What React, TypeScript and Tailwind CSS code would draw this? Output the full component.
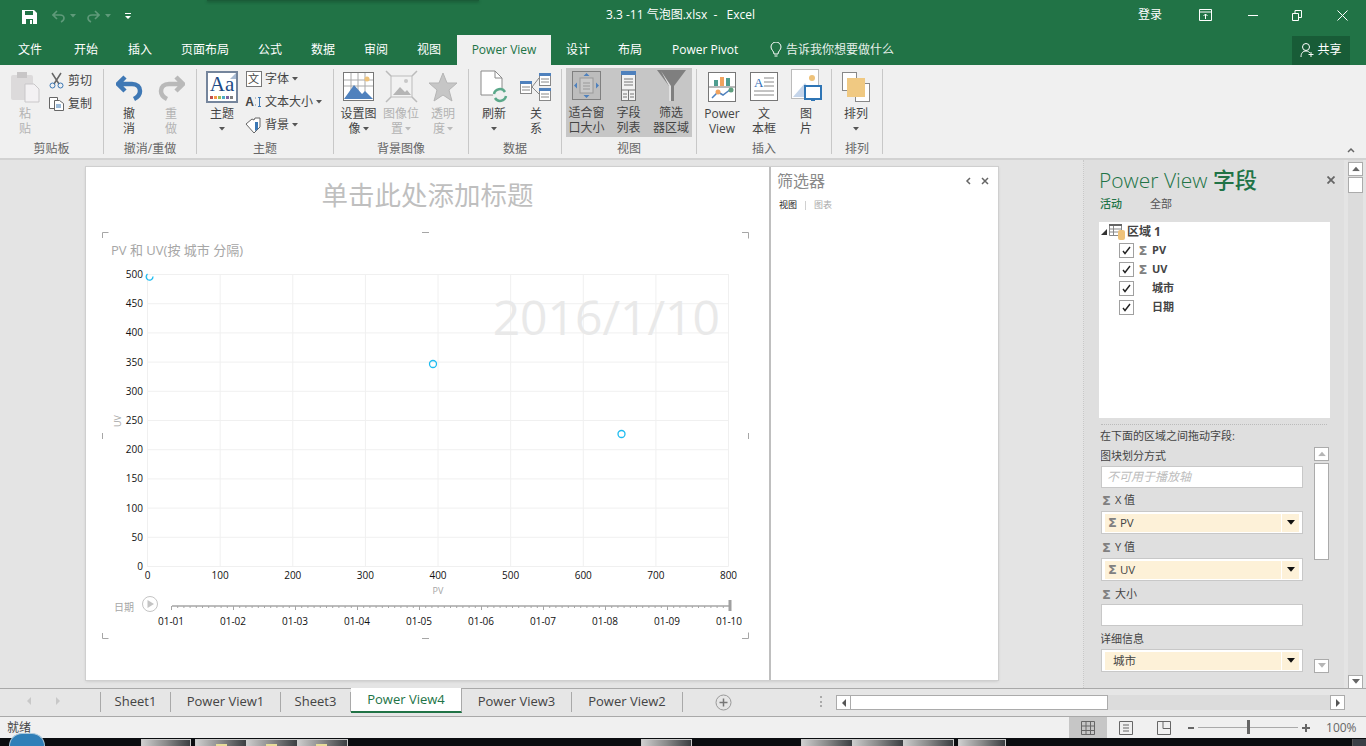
import React from "react";

const Caret = ({ color = "#555", className = "", w = 6 }: { color?: string; className?: string; w?: number }) => (
  <svg width={w} height={(w * 2) / 3} viewBox="0 0 6 4" className={`inline-block ${className}`}>
    <path d="M0 0h6L3 3.5z" fill={color} />
  </svg>
);

const LargeBtn = ({
  w,
  icon,
  lines,
  disabled,
}: {
  w: string;
  icon: React.ReactNode;
  lines: React.ReactNode[];
  disabled?: boolean;
}) => (
  <div className={`${w} flex shrink-0 flex-col items-center`}>
    <div className="flex h-[35px] items-center justify-center">{icon}</div>
    <div className={`mt-[2px] text-center text-[12px] leading-[15px] ${disabled ? "text-[#b3b3b3]" : "text-[#444]"}`}>
      {lines.map((l, i) => (
        <div key={i} className="flex h-[15px] items-center justify-center whitespace-nowrap">
          {l}
        </div>
      ))}
    </div>
  </div>
);

const Group = ({
  w,
  pl,
  label,
  children,
}: {
  w: string;
  pl: string;
  label: string;
  children: React.ReactNode;
}) => (
  <div className={`${w} flex shrink-0 flex-col`}>
    <div className={`flex h-[75px] ${pl} pt-[4px]`}>{children}</div>
    <div className="h-[17px] text-center text-[12px] leading-[17px] text-[#666]">{label}</div>
  </div>
);

const Sep = () => <div className="mt-[4px] h-[85px] w-px shrink-0 bg-[#c8c8c8]" />;

const SmallRow = ({ icon, text, caret }: { icon: React.ReactNode; text: string; caret?: boolean }) => (
  <div className="flex h-[23px] items-center gap-[3px] text-[12px] text-[#444]">
    <span className="flex w-[17px] justify-center">{icon}</span>
    <span className="whitespace-nowrap">{text}</span>
    {caret && <Caret />}
  </div>
);

const PasteIcon = () => (
  <svg width="30" height="32" viewBox="0 0 30 32">
    <rect x="1" y="4" width="22" height="25" rx="2" fill="#dcdadb" />
    <rect x="7" y="1" width="10" height="6" fill="#c8c6c7" />
    <path d="M15 13h9l5 5v13H15z" fill="#f3f1f3" stroke="#c9c7c9" />
  </svg>
);
const UndoIcon = ({ flip, color }: { flip?: boolean; color: string }) => (
  <svg width="27" height="28" viewBox="0 0 27 28" style={flip ? { transform: "scaleX(-1)" } : undefined}>
    <path d="M9 4 2 11l7 7M3 11h13c5 0 8 3 8 7s-2 6-6 8" fill="none" stroke={color} strokeWidth="4.5" />
  </svg>
);
const ThemeIcon = () => (
  <div className="relative flex h-[32px] w-[32px] flex-col items-center border-[2px] border-[#75859c] bg-white pt-[1px]">
    <span className="font-['Liberation_Serif',serif] text-[21px] leading-[21px] text-[#1d4a85]">Aa</span>
    <svg width="24" height="3" viewBox="0 0 24 3" className="mt-[1px]">
      {["#c0504d", "#f79646", "#9bbb59", "#4bacc6", "#8064a2", "#7f7f7f"].map((c, i) => (
        <rect key={c} x={i * 4} width="3" height="3" fill={c} />
      ))}
    </svg>
    <span className="absolute right-0 top-0 h-0 w-0 border-b-[6px] border-l-[6px] border-b-[#a9bbd3] border-l-transparent" />
  </div>
);
const SetImageIcon = () => (
  <svg width="31" height="29" viewBox="0 0 31 29">
    <rect x=".5" y=".5" width="30" height="28" fill="#fff" stroke="#777" />
    <path d="M1 8h29M1 14h29M8 1v20M15 1v20M22 1v20" stroke="#aaa" />
    <circle cx="24" cy="7" r="2.5" fill="#eec27a" />
    <path d="M1 27 11 13l8 9 3-3 8 8z" fill="#4f81bd" />
  </svg>
);
const ImagePosIcon = () => (
  <svg width="33" height="33" viewBox="0 0 33 33">
    <rect x="6" y="6" width="21" height="21" fill="#f2f2f2" stroke="#bbb" />
    <path d="M8 25l7-8 5 5 2-2 4 5z" fill="#b5b5b5" />
    <circle cx="21" cy="11" r="2" fill="#c8c8c8" />
    <path d="M1 1l5 5M32 1l-5 5M1 32l5-5M32 32l-5-5" stroke="#bbb" strokeWidth="1.5" />
  </svg>
);
const StarIcon = () => (
  <svg width="30" height="30" viewBox="0 0 30 30">
    <path d="M15 1l4 10h10l-8 7 3 11-9-6-9 6 3-11-8-7h10z" fill="#c6c6c6" stroke="#b5b5b5" />
  </svg>
);
const RefreshIcon = () => (
  <svg width="28" height="33" viewBox="0 0 28 33">
    <path d="M1 1h14l7 7v17H1z" fill="#fff" stroke="#8a8a8a" />
    <path d="M15 1v7h7" fill="none" stroke="#8a8a8a" />
    <circle cx="20" cy="25" r="7" fill="#f0f0f0" />
    <path d="M14 24a6 6 0 0 1 11-2M26 26a6 6 0 0 1-11 2" fill="none" stroke="#5ba88a" strokeWidth="2.5" />
  </svg>
);
const MiniTable = ({ x, y }: { x: number; y: number }) => (
  <g>
    <rect x={x + 0.5} y={y + 0.5} width="11" height="12" fill="#fff" stroke="#888" />
    <rect x={x} y={y} width="12" height="3" fill="#4f81bd" />
    <path d={`M${x + 2} ${y + 6}h8M${x + 2} ${y + 9}h8`} stroke="#888" />
  </g>
);
const RelationIcon = () => (
  <svg width="32" height="29" viewBox="0 0 32 29">
    <MiniTable x={19} y={1} />
    <MiniTable x={0} y={9} />
    <MiniTable x={19} y={16} />
    <path d="M12 15l7-9M12 15l7 7" stroke="#888" fill="none" />
  </svg>
);
const FitIcon = () => (
  <svg width="30" height="29" viewBox="0 0 30 29">
    <rect x=".5" y=".5" width="28" height="28" fill="#bdbdbd" stroke="#808080" />
    <rect x="8" y="7" width="13" height="15" fill="#c9c9c9" stroke="#999" />
    <path d="M11 12h7M11 15h7M11 18h7" stroke="#999" />
    <path d="M14.500 2l3 3h-6zM14.500 27l3-3h-6zM2 14.500l3-3v6zM27 14.500l-3-3v6z" fill="#4f81bd" />
  </svg>
);
const FieldListIcon = () => (
  <svg width="15" height="30" viewBox="0 0 15 30">
    <rect x=".5" y=".5" width="14" height="29" fill="#f2f2f2" stroke="#777" />
    <rect width="15" height="4" fill="#4f81bd" />
    <path d="M3 8h9M3 11h9M3 14h9M0 19h15M7.500 19v11M2 23h4M9 23h4M2 26h4M9 26h4" stroke="#777" />
  </svg>
);
const FunnelIcon = () => (
  <svg width="29" height="31" viewBox="0 0 29 31">
    <path d="M0 0h29L17 16v15h-5V16z" fill="#7f7f7f" />
    <path d="M4 1l10 15v15h-2V16z" fill="#e0e0e0" />
  </svg>
);
const PowerViewIcon = () => (
  <svg width="28" height="30" viewBox="0 0 28 30">
    <rect x=".5" y=".5" width="27" height="29" fill="#fff" stroke="#777" />
    <path d="M1 15h26" stroke="#777" />
    <rect x="6" y="8" width="4" height="6" fill="#4f9d8f" />
    <rect x="12" y="5" width="4" height="9" fill="#f0a35e" />
    <rect x="18" y="6" width="4" height="8" fill="#4f9d8f" />
    <path d="M4 26l6-6 5 3 8-6" fill="none" stroke="#4f81bd" strokeWidth="1.5" />
    <circle cx="10" cy="20" r="2.500" fill="#f0a35e" />
    <circle cx="23" cy="18" r="2.500" fill="#5e9e7e" />
  </svg>
);
const TextBoxIcon = () => (
  <svg width="28" height="29" viewBox="0 0 28 29">
    <rect x=".5" y=".5" width="27" height="28" fill="#fff" stroke="#777" />
    <text x="4" y="15" fontSize="13" fill="#2f6cb5" fontFamily="Liberation Serif, serif">A</text>
    <path d="M14 6h10M14 10h10M14 14h10M4 19h20M4 23h20" stroke="#888" />
  </svg>
);
const PictureIcon = () => (
  <svg width="31" height="35" viewBox="0 0 31 35">
    <rect x=".5" y=".5" width="27" height="29" fill="#fff" stroke="#bbb" />
    <circle cx="21" cy="9" r="3" fill="#eec27a" />
    <path d="M2 28 14 14l10 14z" fill="#c5d5ea" />
    <rect x="14" y="17" width="16" height="13" fill="#fff" stroke="#2f75b5" strokeWidth="2" />
    <path d="M20 30h4v2h-4z" fill="#2f75b5" />
  </svg>
);
const ArrangeIcon = () => (
  <svg width="28" height="30" viewBox="0 0 28 30">
    <rect x=".5" y=".5" width="14" height="18" fill="#fff" stroke="#888" />
    <rect x="13.500" y="11.500" width="14" height="18" fill="#fff" stroke="#888" />
    <rect x="5" y="6" width="18" height="19" fill="#f0c982" />
  </svg>
);

const Scissors = () => (
  <svg width="15" height="17" viewBox="0 0 15 17">
    <path d="M3 1l7 11M12 1L5 12" stroke="#666" strokeWidth="1.5" />
    <circle cx="3.500" cy="13.500" r="2.500" fill="none" stroke="#3b78b5" />
    <circle cx="11.500" cy="13.500" r="2.500" fill="none" stroke="#3b78b5" />
  </svg>
);
const CopyIcon = () => (
  <svg width="15" height="14" viewBox="0 0 15 14">
    <path d="M.5.5h8v11h-8z" fill="#fff" stroke="#666" />
    <path d="M5.500 3.500h5l4 3v7h-9z" fill="#fff" stroke="#666" />
    <path d="M7 8h5M7 10h5" stroke="#3b78b5" />
  </svg>
);

const Ribbon = () => (
  <div className="flex h-[95px] shrink-0 border-b-[2px] border-[#d2d2d2] bg-[#f0f0f0]">
    <Group w="w-[103px]" pl="pl-[4px]" label="剪贴板">
      <LargeBtn w="w-[42px]" icon={<PasteIcon />} lines={["粘", "贴"]} disabled />
      <div className="ml-[2px] flex flex-col">
        <SmallRow icon={<Scissors />} text="剪切" />
        <SmallRow icon={<CopyIcon />} text="复制" />
      </div>
    </Group>
    <Sep />
    <Group w="w-[92px]" pl="pl-[4px]" label="撤消/重做">
      <LargeBtn w="w-[42px]" icon={<UndoIcon color="#3f78b5" />} lines={["撤", "消"]} />
      <LargeBtn w="w-[42px]" icon={<UndoIcon flip color="#b9b9b9" />} lines={["重", "做"]} disabled />
    </Group>
    <Sep />
    <Group w="w-[136px]" pl="pl-[3px]" label="主题">
      <LargeBtn w="w-[44px]" icon={<ThemeIcon />} lines={["主题", <Caret key="c" />]} />
      <div className="ml-[1px] mt-[-2px] flex flex-col">
        <SmallRow
          icon={<span className="flex h-[16px] w-[16px] items-center justify-center border border-[#777] bg-white text-[11px] leading-none">文</span>}
          text="字体"
          caret
        />
        <SmallRow
          icon={
            <span className="flex items-center font-['Liberation_Sans',sans-serif] text-[12px] font-bold leading-none text-[#444]">
              A
              <svg width="8" height="12" viewBox="0 0 8 12">
                <path d="M1 2h1M1 9h1" stroke="#888" />
                <path d="M5.500 2v8M4 1.500h3M4 10.500h3" stroke="#3b78b5" />
              </svg>
            </span>
          }
          text="文本大小"
          caret
        />
        <SmallRow
          icon={
            <svg width="17" height="16" viewBox="0 0 17 16">
              <path d="M1 7l6-5 2 1 1-2h5v9l-6 6z" fill="#fff" stroke="#666" />
              <path d="M10 5h3v7l-3 2z" fill="#3b78b5" />
            </svg>
          }
          text="背景"
          caret
        />
      </div>
    </Group>
    <Sep />
    <Group w="w-[134px]" pl="pl-[3px]" label="背景图像">
      <LargeBtn w="w-[43px]" icon={<SetImageIcon />} lines={["设置图", <span key="a" className="flex items-center gap-[2px]">像<Caret /></span>]} />
      <LargeBtn w="w-[42px]" icon={<ImagePosIcon />} lines={["图像位", <span key="a" className="flex items-center gap-[2px]">置<Caret color="#bbb" /></span>]} disabled />
      <LargeBtn w="w-[42px]" icon={<StarIcon />} lines={["透明", <span key="a" className="flex items-center gap-[2px]">度<Caret color="#bbb" /></span>]} disabled />
    </Group>
    <Sep />
    <Group w="w-[92px]" pl="pl-[4px]" label="数据">
      <LargeBtn w="w-[42px]" icon={<RefreshIcon />} lines={["刷新", <Caret key="c" />]} />
      <LargeBtn w="w-[42px]" icon={<RelationIcon />} lines={["关", "系"]} />
    </Group>
    <Sep />
    <Group w="w-[134px]" pl="pl-[4px]" label="视图">
      <div className="-mt-px flex h-[69px] bg-[#c6c6c6]">
        <LargeBtn w="w-[41px]" icon={<FitIcon />} lines={["适合窗", "口大小"]} />
        <LargeBtn w="w-[43px]" icon={<FieldListIcon />} lines={["字段", "列表"]} />
        <LargeBtn w="w-[42px]" icon={<FunnelIcon />} lines={["筛选", "器区域"]} />
      </div>
    </Group>
    <Sep />
    <Group w="w-[134px]" pl="pl-[4px]" label="插入">
      <LargeBtn w="w-[42px]" icon={<PowerViewIcon />} lines={["Power", "View"]} />
      <LargeBtn w="w-[42px]" icon={<TextBoxIcon />} lines={["文", "本框"]} />
      <LargeBtn w="w-[42px]" icon={<PictureIcon />} lines={["图", "片"]} />
    </Group>
    <Sep />
    <Group w="w-[50px]" pl="pl-[3px]" label="排列">
      <LargeBtn w="w-[42px]" icon={<ArrangeIcon />} lines={["排列", <Caret key="c" />]} />
    </Group>
    <Sep />
    <div className="flex flex-1 items-end justify-end pb-[5px] pr-[11px]">
      <svg width="8" height="6" viewBox="0 0 8 6">
        <path d="M1 5l3-3 3 3" fill="none" stroke="#666" strokeWidth="1.5" />
      </svg>
    </div>
  </div>
);

const TitleBar = () => (
  <div className="relative flex h-[35px] shrink-0 items-center bg-[#217346] pb-[5px] text-[12px] text-white">
    <div className="absolute left-[207px] top-0 h-[1px] w-[272px] bg-[#1a5c38] shadow-[0_1px_3px_#123d26]" />
    <svg width="15" height="14" viewBox="0 0 15 14" className="ml-[22px] mt-[3px]">
      <path d="M0 0h12l3 3v11H0z" fill="#fff" />
      <path d="M3 1h8v4H3zM4 9h7v5H4z" fill="#217346" />
      <path d="M8 10h2v4H8z" fill="#fff" />
    </svg>
    <svg width="13" height="13" viewBox="0 0 13 13" className="ml-[15px] mt-[2px]">
      <path d="M5 1 1 5l4 4M2 5h6c3 0 4 2 4 3s-1 3-3 4" fill="none" stroke="#5f9a7a" strokeWidth="1.6" />
    </svg>
    <Caret color="#5f9a7a" className="ml-[5px] mt-[2px]" />
    <svg width="13" height="13" viewBox="0 0 13 13" className="ml-[11px] mt-[2px] -scale-x-100">
      <path d="M5 1 1 5l4 4M2 5h6c3 0 4 2 4 3s-1 3-3 4" fill="none" stroke="#5f9a7a" strokeWidth="1.6" />
    </svg>
    <Caret color="#5f9a7a" className="ml-[5px] mt-[2px]" />
    <svg width="6" height="6" viewBox="0 0 6 6" className="ml-[14px] mt-[2px]">
      <path d="M0 0h6v1H0zM0 3h6L3 6z" fill="#fff" />
    </svg>
    <span className="ml-[475px] whitespace-nowrap">3.3 -11 气泡图.xlsx&nbsp;&nbsp;-&nbsp;&nbsp;&nbsp;Excel</span>
    <span className="ml-auto">登录</span>
    <svg width="13" height="12" viewBox="0 0 13 12" className="ml-[37px]">
      <path d="M.5.5h12v11H.5zM1 3h11M6.500 10V5M4.500 7l2-2 2 2" fill="none" stroke="#fff" />
    </svg>
    <div className="ml-[36px] h-px w-[10px] bg-white" />
    <svg width="10" height="11" viewBox="0 0 10 11" className="ml-[34px]">
      <path d="M.5 3.500h6v7h-6zM3 3V.5h6.500v7H7" fill="none" stroke="#fff" />
    </svg>
    <svg width="11" height="11" viewBox="0 0 11 11" className="ml-[35px] mr-[18px]">
      <path d="M.5.5l10 10M10.500.5l-10 10" stroke="#fff" />
    </svg>
  </div>
);

const tabs = [
  { t: "文件", w: "w-[56px]" },
  { t: "开始", w: "w-[54px]" },
  { t: "插入", w: "w-[53px]" },
  { t: "页面布局", w: "w-[77px]" },
  { t: "公式", w: "w-[53px]" },
  { t: "数据", w: "w-[53px]" },
  { t: "审阅", w: "w-[53px]" },
  { t: "视图", w: "w-[40px]" },
];

const TabBar = () => (
  <div className="flex h-[30px] shrink-0 items-center bg-[#217346] text-[12px] text-white">
    <div className="w-[18px]" />
    {tabs.map((x) => (
      <div key={x.t} className={`${x.w} whitespace-nowrap`}>
        {x.t}
      </div>
    ))}
    <div className="flex h-full w-[94px] items-center justify-center whitespace-nowrap bg-[#f0f0f0] text-[#217346]">
      Power View
    </div>
    <div className="ml-[15px] w-[52px]">设计</div>
    <div className="w-[54px]">布局</div>
    <div className="w-[98px] whitespace-nowrap">Power Pivot</div>
    <svg width="12" height="16" viewBox="0 0 12 16">
      <path d="M4 12c0-3-3-4-3-7a5 5 0 0 1 10 0c0 3-3 4-3 7zM4.500 14h3" fill="none" stroke="#fff" />
    </svg>
    <span className="ml-[4px] whitespace-nowrap text-[#e6f0ea]">告诉我你想要做什么</span>
    <div className="ml-auto mr-[16px] flex h-[29px] w-[58px] items-center justify-center gap-[2px] bg-[#185c37]">
      <svg width="15" height="16" viewBox="0 0 15 16">
        <circle cx="6" cy="5" r="3.500" fill="none" stroke="#fff" />
        <path d="M1 15c0-4 2-6 5-6 2 0 3 1 4 2M11 10v5M8.500 12.500h5" fill="none" stroke="#fff" />
      </svg>
      共享
    </div>
  </div>
);

const yTicks = [0, 50, 100, 150, 200, 250, 300, 350, 400, 450, 500];
const xTicks = [0, 100, 200, 300, 400, 500, 600, 700, 800];
const dates = ["01-01", "01-02", "01-03", "01-04", "01-05", "01-06", "01-07", "01-08", "01-09", "01-10"];
const xAt = (v: number) => 147.5 + (v / 800) * 581;
const yAt = (v: number) => 566.5 - (v / 500) * 292;
const dateX = (i: number) => 171 + i * 62;

const Chart = () => (
  <svg width="683" height="455" viewBox="86 225 683 455" className="block">
    <path
      d="M102.500 238v-5.500h6M742 232.500h6.500v6M102.500 633v5.500h6M742 638.500h6.500v-6M422 232.500h7M422 638.500h7M102.500 433v6M748.500 433v6"
      fill="none"
      stroke="#a6a6a6"
    />
    <text x="111" y="255" fontSize="13" fill="#a6a6a6">PV 和 UV(按 城市 分隔)</text>
    {yTicks.map((v) => (
      <g key={v}>
        <path d={`M147 ${yAt(v)}H728.500`} stroke="#f0f0f0" />
        <text x="143" y={yAt(v) + 3.500} fontSize="10" textAnchor="end" fill="#111">{v}</text>
      </g>
    ))}
    {xTicks.map((v) => (
      <g key={v}>
        <path d={`M${xAt(v)} 274V566.500`} stroke="#f0f0f0" />
        <text x={xAt(v)} y="579" fontSize="10" textAnchor="middle" fill="#111">{v}</text>
      </g>
    ))}
    <text x="720" y="335" fontSize="48" textAnchor="end" fill="#e9e9e9">2016/1/10</text>
    <text x="438" y="594" fontSize="9" textAnchor="middle" fill="#a6a6a6">PV</text>
    <text x="121" y="421" fontSize="9" textAnchor="middle" fill="#a6a6a6" transform="rotate(-90 121 421)">UV</text>
    <g fill="none" stroke="#1ebcf0" strokeWidth="1.300">
      <path d="M147.500 274a3.500 3.500 0 0 0 0 5.500a3.500 3.500 0 0 0 5.500-3" />
      <circle cx="433" cy="364" r="3.500" />
      <circle cx="621.500" cy="434" r="3.500" />
    </g>
    <text x="114" y="611" fontSize="10" fill="#a6a6a6">日期</text>
    <circle cx="150" cy="604" r="7.500" fill="none" stroke="#c4c4c4" />
    <path d="M147.500 600l6.500 4-6.500 4z" fill="#c4c4c4" />
    <path d="M172 606H730" stroke="#a6a6a6" strokeWidth="1.500" />
    {Array.from({ length: 91 }, (_, i) => (
      <path key={i} d={`M${171.500 + (i * 62) / 10} 606v${i % 10 === 0 ? 4 : 2}`} stroke="#a6a6a6" />
    ))}
    <rect x="728.500" y="600" width="3" height="11" fill="#a0a0a0" />
    {dates.map((d, i) => (
      <text key={d} x={dateX(i)} y="625" fontSize="10" textAnchor="middle" fill="#111">{d}</text>
    ))}
  </svg>
);

const Canvas = () => (
  <div className="flex h-[513px] w-[912px] bg-white shadow-[0_0_0_1px_#cfcfcf,0_1px_3px_#bdbdbd]">
    <div className="w-[683px] shrink-0">
      <div className="flex h-[58px] items-start justify-center pt-[9px] text-[26.500px] leading-[38px] text-[#bfbfbf]">
        单击此处添加标题
      </div>
      <Chart />
    </div>
    <div className="flex-1 border-l-[2px] border-[#bfbfbf] pl-[6px] pr-[9px]">
      <div className="flex h-[28px] items-center justify-between">
        <span className="text-[16px] text-[#8a8a8a]">筛选器</span>
        <span className="flex items-center gap-[10px]">
          <svg width="6" height="8" viewBox="0 0 6 8">
            <path d="M5 1 2 4l3 3" fill="none" stroke="#666" strokeWidth="1.500" />
          </svg>
          <svg width="8" height="8" viewBox="0 0 8 8">
            <path d="M1 1l6 6M7 1 1 7" stroke="#666" strokeWidth="1.500" />
          </svg>
        </span>
      </div>
      <div className="ml-[2px] mt-[4px] flex items-center text-[9px] leading-[12px]">
        <span className="text-[#222]">视图</span>
        <span className="mx-[8px] h-[9px] w-px bg-[#d0d0d0]" />
        <span className="text-[#aaa]">图表</span>
      </div>
    </div>
  </div>
);

const Sigma = ({ cls = "" }: { cls?: string }) => (
  <span className={`font-['DejaVu_Sans',sans-serif] font-bold leading-none text-[#808080] ${cls}`}>Σ</span>
);

const fields = [
  { name: "PV", sum: true },
  { name: "UV", sum: true },
  { name: "城市", sum: false },
  { name: "日期", sum: false },
];

const Chip = ({ children }: { children: React.ReactNode }) => (
  <div className="flex h-[23px] items-center border border-[#c8c8c8] bg-white px-[3px]">
    <div className="flex h-[18px] flex-1 items-center gap-[3px] bg-[#fdf1d8] pl-[3px] text-[11.500px] text-[#444]">{children}</div>
    <div className="ml-px flex h-[18px] w-[17px] items-center justify-center bg-[#fdf1d8]">
      <Caret color="#111" w={8} />
    </div>
  </div>
);

const WellLabel = ({ sigma, text, cls }: { sigma?: boolean; text: string; cls: string }) => (
  <div className={`flex items-center gap-[4px] text-[11px] leading-[14px] text-[#444] ${cls}`}>
    {sigma && <Sigma cls="text-[13px] ml-[1px]" />}
    {text}
  </div>
);

const MiniBtn = ({ up, disabled }: { up?: boolean; disabled?: boolean }) => (
  <div className="flex h-[14px] w-[15px] items-center justify-center border border-[#ababab] bg-white">
    <Caret color={disabled ? "#b5b5b5" : "#666"} w={8} className={up ? "rotate-180" : ""} />
  </div>
);

const FieldPane = () => (
  <div className="flex h-full w-[260px] shrink-0 flex-col bg-[#dfdfdf]">
    <div className="flex h-[38px] items-center justify-between pl-[15px] pr-[9px] pt-[1px]">
      <span className="whitespace-nowrap text-[21px] font-light leading-[28px] text-[#217346]">
        Power View <span className="font-medium text-[22px]">字段</span>
      </span>
      <svg width="8" height="8" viewBox="0 0 8 8">
        <path d="M.5.5l7 7M7.500.5l-7 7" stroke="#666" strokeWidth="1.800" />
      </svg>
    </div>
    <div className="flex h-[13px] items-center pl-[16px] text-[11px]">
      <span className="w-[50px] font-medium text-[#217346]">活动</span>
      <span className="text-[#555]">全部</span>
    </div>
    <div className="ml-[15px] mt-[11px] h-[196px] w-[231px] bg-white pt-[1px]">
      <div className="flex h-[18px] items-center pl-[2px]">
        <svg width="6" height="6" viewBox="0 0 6 6">
          <path d="M6 0v6H0z" fill="#333" />
        </svg>
        <svg width="17" height="16" viewBox="0 0 17 16" className="ml-[2px]">
          <path d="M.5 1.500h12v10H.5zM4.500 2v9M.5 5h12M.5 8h12" fill="none" stroke="#888" />
          <rect width="13" height="2" fill="#666" />
          <rect x="9" y="6" width="7" height="10" rx="2" fill="#eec27a" />
        </svg>
        <span className="ml-[1px] text-[12px] font-bold text-[#444]">区域 1</span>
      </div>
      {fields.map((f) => (
        <div key={f.name} className="flex h-[19px] items-center pl-[20px]">
          <div className="flex h-[15px] w-[15px] items-center justify-center border border-[#a0a0a0]">
            <svg width="9" height="9" viewBox="0 0 9 9">
              <path d="M1 5l2 2.500L8 1" fill="none" stroke="#222" strokeWidth="1.400" />
            </svg>
          </div>
          <span className="flex w-[18px] justify-center">{f.sum && <Sigma cls="text-[13px]" />}</span>
          <span className="text-[11px] font-bold text-[#444]">{f.name}</span>
        </div>
      ))}
    </div>
    <div className="ml-[17px] mt-[6px] w-[226px] border-t border-dotted border-[#bbb]" />
    <div className="ml-[16px] mt-[4px] text-[11px] leading-[14px] text-[#444]">在下面的区域之间拖动字段:</div>
    <div className="flex min-h-0 flex-1">
      <div className="ml-[17px] w-[202px] overflow-hidden pt-[6px]">
        <WellLabel text="图块划分方式" cls="-ml-[1px] h-[14px]" />
        <div className="mt-[3px] flex h-[22px] items-center border border-[#c8c8c8] bg-white pl-[5px] text-[12px] italic text-[#bdbdbd]">
          不可用于播放轴
        </div>
        <WellLabel sigma text="X 值" cls="mt-[5px] h-[14px]" />
        <div className="mt-[4px]"><Chip><Sigma cls="text-[13px]" />PV</Chip></div>
        <WellLabel sigma text="Y 值" cls="mt-[6px] h-[14px]" />
        <div className="mt-[4px]"><Chip><Sigma cls="text-[13px]" />UV</Chip></div>
        <WellLabel sigma text="大小" cls="mt-[6px] h-[14px]" />
        <div className="mt-[3px] h-[22px] border border-[#c8c8c8] bg-white" />
        <WellLabel text="详细信息" cls="-ml-[1px] mt-[6px] h-[14px]" />
        <div className="mt-[3px] h-[26px] overflow-hidden"><Chip><span className="ml-[5px]">城市</span></Chip></div>
      </div>
      <div className="ml-[11px] flex w-[15px] flex-col pt-[4px]">
        <MiniBtn up disabled />
        <div className="mt-[2px] h-[97px] border border-[#ababab] bg-white" />
        <div className="mt-[99px]">
          <MiniBtn disabled />
        </div>
      </div>
    </div>
  </div>
);

const MainArea = () => (
  <div className="flex h-[528px] shrink-0 bg-[#e4e4e4]">
    <div className="w-[1084px] shrink-0 border-r border-dotted border-[#c8c8c8] pl-[86px] pt-[7px]">
      <Canvas />
    </div>
    <FieldPane />
    <div className="ml-[4px] flex w-[15px] flex-col bg-[#dcdcdc] pt-[2px]">
      <MiniBtn up />
      <div className="mt-[1px] h-[16px] border border-[#ababab] bg-white" />
      <div className="mt-auto mb-[-1px]">
        <MiniBtn />
      </div>
    </div>
  </div>
);

const sheetTabs = [
  { t: "Sheet1", w: "w-[70px]" },
  { t: "Power View1", w: "w-[110px]" },
  { t: "Sheet3", w: "w-[70px]" },
  { t: "Power View4", w: "w-[111px]", active: true },
  { t: "Power View3", w: "w-[110px]" },
  { t: "Power View2", w: "w-[111px]" },
];

const SheetBar = () => (
  <div className="flex h-[29px] shrink-0 border-b border-t border-[#a9a9a9] bg-[#e6e6e6] text-[13px] leading-[18px] text-[#444]">
    <div className="flex w-[100px] items-center pl-[27px] pb-[3px]">
      <svg width="4" height="8" viewBox="0 0 4 8"><path d="M4 0v8L0 4z" fill="#c8c8c8" /></svg>
      <svg width="4" height="8" viewBox="0 0 4 8" className="ml-[25px]"><path d="M0 0v8l4-4z" fill="#c8c8c8" /></svg>
    </div>
    <div className="mt-[3px] h-[20px] w-px bg-[#a9a9a9]" />
    {sheetTabs.map((s) => (
      <div
        key={s.t}
        className={
          s.active
            ? `${s.w} -mt-px flex h-[25px] items-center justify-center border-b-[2px] border-r border-b-[#217346] border-r-[#a9a9a9] bg-white pb-[2px] text-[#217346]`
            : `${s.w} mt-[3px] flex h-[20px] items-center justify-center border-r border-[#a9a9a9] pb-[3px] whitespace-nowrap`
        }
      >
        {s.t}
      </div>
    ))}
    <svg width="17" height="17" viewBox="0 0 17 17" className="ml-[32px] mt-[5px]">
      <circle cx="8.500" cy="8.500" r="7.500" fill="none" stroke="#999" />
      <path d="M4.500 8.500h8M8.500 4.500v8" stroke="#777" strokeWidth="1.500" />
    </svg>
    <div className="ml-[88px] mt-[7px] flex h-[11px] w-[2px] flex-col justify-between">
      <span className="h-[2px] bg-[#aaa]" />
      <span className="h-[2px] bg-[#aaa]" />
      <span className="h-[2px] bg-[#aaa]" />
    </div>
    <div className="ml-[14px] mt-[6px] flex h-[15px] w-[509px] bg-[#dcdcdc]">
      <div className="flex w-[15px] items-center justify-center border border-[#ababab] bg-white">
        <svg width="4" height="8" viewBox="0 0 4 8"><path d="M4 0v8L0 4z" fill="#555" /></svg>
      </div>
      <div className="w-[257px] border-y border-r border-[#ababab] bg-white" />
      <div className="ml-auto flex w-[15px] items-center justify-center border border-[#ababab] bg-white">
        <svg width="4" height="8" viewBox="0 0 4 8"><path d="M0 0v8l4-4z" fill="#555" /></svg>
      </div>
    </div>
  </div>
);

const StatusBar = () => (
  <div className="flex h-[21px] shrink-0 items-center bg-[#f0f0f0] text-[12px] text-[#444]">
    <span className="ml-[7px]">就绪</span>
    <div className="ml-[1038px] flex h-full w-[38px] items-center justify-center bg-[#c6c6c6]">
      <svg width="14" height="14" viewBox="0 0 14 14">
        <path d="M.5.500h13v13H.5zM5 .500v13M9.500.500v13M.5 5h13M.5 9.500h13" fill="none" stroke="#666" />
      </svg>
    </div>
    <svg width="14" height="14" viewBox="0 0 14 14" className="ml-[12px]">
      <path d="M.5.500h13v13H.5zM4 4h6M4 7h6M4 10h6" fill="none" stroke="#666" />
    </svg>
    <svg width="14" height="14" viewBox="0 0 14 14" className="ml-[24px]">
      <path d="M.5.500h13v13H.5zM6 .500v7h7" fill="none" stroke="#666" />
    </svg>
    <div className="ml-[17px] h-[2px] w-[6px] bg-[#666]" />
    <div className="relative ml-[4px] h-px w-[100px] bg-[#aaa]">
      <span className="absolute left-[49px] top-[-7px] h-[14px] w-[3px] bg-[#666]" />
    </div>
    <svg width="8" height="8" viewBox="0 0 8 8" className="ml-[4px]">
      <path d="M0 4h8M4 0v8" stroke="#666" strokeWidth="2" />
    </svg>
    <span className="ml-[16px] whitespace-nowrap text-[#666]">100%</span>
  </div>
);

const taskBtns = [
  { w: "w-[50px]", ml: "ml-[141px]", segs: 1 },
  { w: "w-[153px]", ml: "ml-[4px]", segs: 3, lamp: true },
  { w: "w-[51px]", ml: "ml-[293px]", segs: 1 },
  { w: "w-[153px]", ml: "ml-[109px]", segs: 3 },
  { w: "w-[48px]", ml: "ml-[4px]", segs: 1 },
];

const Taskbar = () => (
  <div className="relative flex h-[8px] shrink-0 items-start bg-[#0b0d10] pt-px">
    <div className="absolute left-[9px] top-[-5px] h-[13px] w-[36px] rounded-t-full border border-b-0 border-[#a9c8dc] bg-[#2f7fb8]" />
    {taskBtns.map((b, i) => (
      <div key={i} className={`${b.w} ${b.ml} flex h-full border-x border-t border-[#c8c8c8]`}>
        {Array.from({ length: b.segs }, (_, j) => (
          <div key={j} className="flex flex-1 items-end justify-center bg-gradient-to-r from-[#cfcfcf] via-[#8a8a8a] to-[#3c3f42]">
            {b.lamp && <span className="h-[2px] w-[11px] bg-[#e8dc9a]" />}
          </div>
        ))}
      </div>
    ))}
    <div className="ml-auto h-full w-[14px] border-l border-[#555] bg-[#3a3f46]" />
  </div>
);

const App = () => (
  <div className="flex h-[746px] w-[1366px] flex-col overflow-hidden font-['Open_Sans','Noto_Sans_CJK_SC',sans-serif]">
    <TitleBar />
    <TabBar />
    <Ribbon />
    <MainArea />
    <SheetBar />
    <StatusBar />
    <Taskbar />
  </div>
);

export default App;
